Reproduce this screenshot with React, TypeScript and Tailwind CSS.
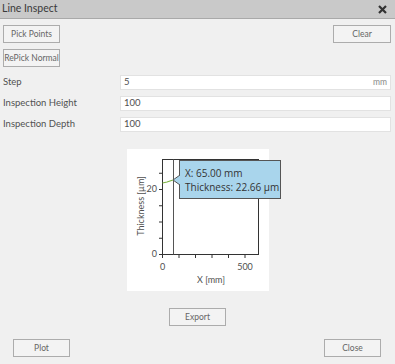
import React from "react";

const font = { fontFamily: 'Lato, "Noto Sans", "Liberation Sans", sans-serif' };
const tipFont = { fontFamily: '"Open Sans", "Noto Sans", sans-serif' };

function Btn({ label, className = "" }: { label: string; className?: string }) {
  return (
    <button
      className={`h-[18px] w-[57px] whitespace-nowrap border border-[#acacac] bg-[#f3f3f3] text-[8.5px] text-[#666] leading-none ${className}`}
    >
      {label}
    </button>
  );
}

function Field({ label, value, unit }: { label: string; value: string; unit?: string }) {
  return (
    <div className="flex items-center">
      <span className="w-[117px] text-[9.5px] text-[#505050]">{label}</span>
      <div className="flex h-[15px] flex-1 items-center justify-between border border-[#e2e2e2] bg-white px-[3px] text-[9.5px] text-[#505050]">
        <span>{value}</span>
        {unit && <span className="text-[8.5px] text-[#888]">{unit}</span>}
      </div>
    </div>
  );
}

function Chart() {
  const yTicks = [0, 5, 10, 15, 20, 25];
  const xTicks = [0, 100, 200, 300, 400, 500];
  const y = (v: number) => 105 - v * 3.25;
  const x = (v: number) => 35 + v * 0.165;
  return (
    <div className="relative h-[142px] w-[142px] bg-white">
      <svg width="142" height="142" className="block" style={font}>
        <rect x="35.5" y="10.5" width="96" height="95" fill="none" stroke="#333" strokeWidth="1" />
        {yTicks.map((t) => (
          <line key={t} x1="32" x2="35.5" y1={y(t) + 0.5} y2={y(t) + 0.5} stroke="#333" />
        ))}
        {xTicks.map((t) => (
          <line key={t} x1={x(t) + 0.5} x2={x(t) + 0.5} y1="105.5" y2="109" stroke="#333" />
        ))}
        <line x1="46.5" x2="46.5" y1="10.5" y2="105.5" stroke="#555" />
        <polyline points="35.5,34 40,33 46,31" fill="none" stroke="#7cb342" strokeWidth="1.2" />
        <g fontSize="9" fill="#505050">
          <text x="30" y={y(20) + 3} textAnchor="end">20</text>
          <text x="30" y={y(0) + 3} textAnchor="end">0</text>
          <text x={x(0) + 0.5} y="121" textAnchor="middle">0</text>
          <text x={x(500) + 0.5} y="121" textAnchor="middle">500</text>
          <text x="84" y="134" textAnchor="middle">X [mm]</text>
          <text x="0" y="0" textAnchor="middle" transform="translate(17 57) rotate(-90)">
            Thickness [µm]
          </text>
        </g>
      </svg>
      <div
        className="absolute left-[52px] top-[11px] flex h-[39px] w-[102px] flex-col justify-center whitespace-nowrap border border-[#555] bg-[#a9d5ec] pl-[5px] text-[10px] leading-[14px] text-[#333]"
        style={tipFont}
      >
        <span>X: 65.00 mm</span>
        <span>Thickness: 22.66 µm</span>
        <svg width="7" height="10" className="absolute left-[-7px] top-[14px]">
          <polygon points="7,0 0,5 7,10" fill="#a9d5ec" />
          <polyline points="7,0 0,5 7,10" fill="none" stroke="#555" />
        </svg>
      </div>
    </div>
  );
}

export default function App() {
  return (
    <div className="flex h-[364px] w-[395px] flex-col bg-[#f0f0f0]" style={font}>
      <div className="flex h-[19px] items-center justify-between border-b border-[#a9a9a9] bg-[#c9c9c9] pl-[2px] pr-[8px]">
        <span className="text-[10.5px] text-[#3a3a3a]">Line Inspect</span>
        <svg width="9" height="9" viewBox="0 0 9 9">
          <path d="M1 1 L8 8 M8 1 L1 8" stroke="#333" strokeWidth="2.2" />
        </svg>
      </div>

      <div className="flex flex-col px-[3px] pt-[6px]">
        <div className="flex items-start justify-between pr-[1px]">
          <Btn label="Pick Points" />
          <Btn label="Clear" className="w-[58px]" />
        </div>
        <Btn label="RePick Normal" className="mt-[6px]" />

        <div className="mt-[8px] flex flex-col gap-[6px] pr-[1px]">
          <Field label="Step" value="5" unit="mm" />
          <Field label="Inspection Height" value="100" />
          <Field label="Inspection Depth" value="100" />
        </div>
      </div>

      <div className="mt-[17px] flex justify-center pl-[1px]">
        <Chart />
      </div>

      <div className="mt-[17px] flex justify-center">
        <Btn label="Export" />
      </div>

      <div className="mt-[13px] flex justify-between pl-[13px] pr-[14px]">
        <Btn label="Plot" className="w-[56px]" />
        <Btn label="Close" />
      </div>
    </div>
  );
}
